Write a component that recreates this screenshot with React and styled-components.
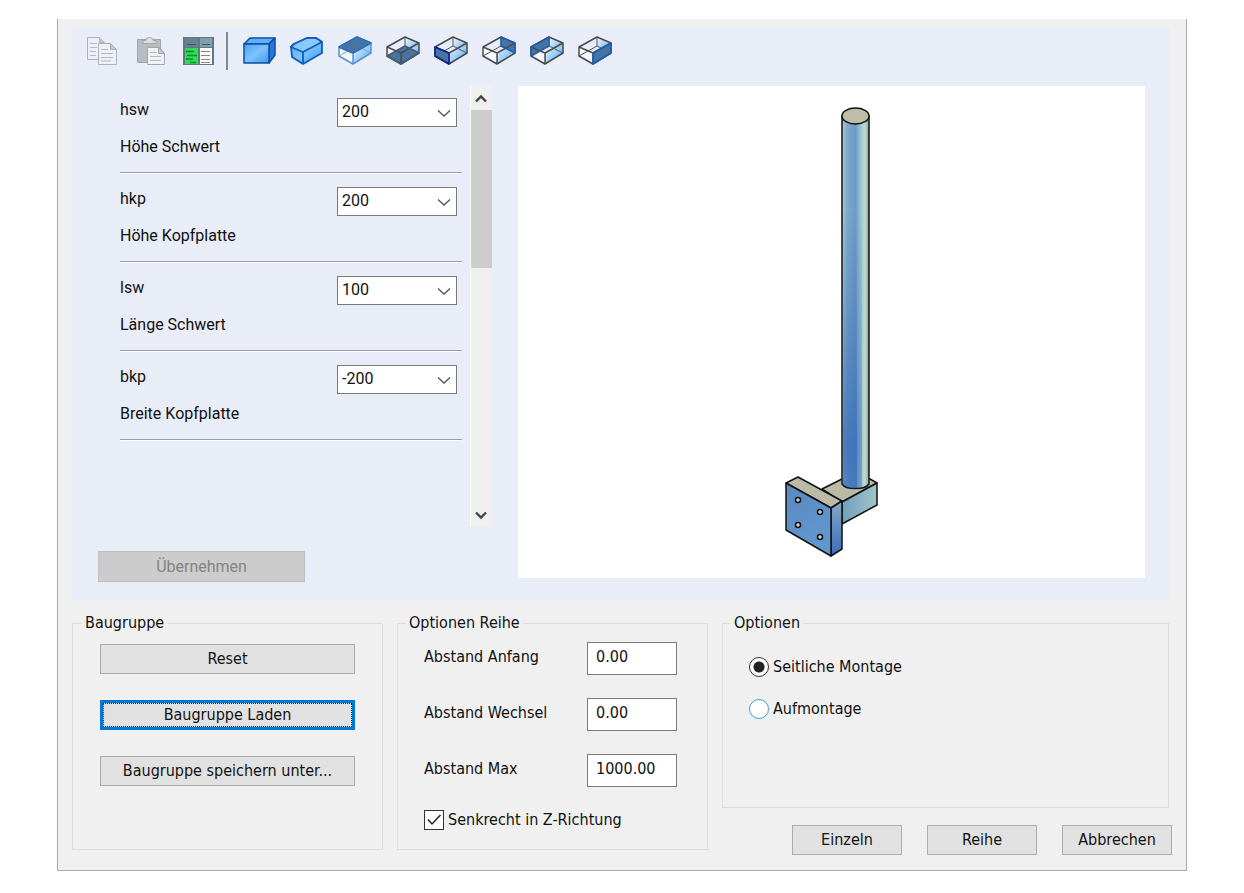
import React from 'react'
import styled, { createGlobalStyle } from 'styled-components'

const GlobalStyle = createGlobalStyle`
  *, *::before, *::after {
    box-sizing: border-box;
  }

  body {
    margin: 0;
    background: #fff;
    color: #111;
    font-family: 'DejaVu Sans Condensed', 'DejaVu Sans', sans-serif;
    font-stretch: condensed;
    font-size: 16px;
    line-height: 20px;
  }

  button, input, select {
    font: inherit;
    color: inherit;
    margin: 0;
  }
`

const Dialog = styled.main`
  margin: 19px 57px 22px;
  padding: 9px 14px 15px;
  background: #f0f0f0;
  border: 1px solid #a9a9a9;
  border-top: 0;
`

const ModelPanel = styled.section`
  margin-right: 2px;
  padding: 0 25px 18px 0;
  background: #e9edf7;
`

const Toolbar = styled.div`
  display: flex;
  align-items: center;
  gap: 14px;
  height: 58px;
  padding: 0 14px 12px;
`

const ToolButton = styled.button`
  display: flex;
  padding: 0;
  border: 0;
  background: none;
`

const Separator = styled.span`
  width: 2px;
  height: 38px;
  margin-left: -4px;
  background: #85898f;
`

const ModelBody = styled.div`
  display: flex;
  gap: 26px;
  padding-left: 26px;
`

const ParamColumn = styled.div`
  flex: none;
  width: 394px;
  font-family: Roboto, sans-serif;
  font-stretch: normal;
`

const ParamScroller = styled.div`
  display: flex;
  justify-content: space-between;
  height: 441px;
  margin-bottom: 24px;
  padding-left: 22px;
`

const ParamList = styled.div`
  display: flex;
  flex-direction: column;
  gap: 14px;
  width: 342px;
  padding-top: 12px;
`

const Param = styled.div`
  height: 75px;
  border-bottom: 1px solid #9a9ca2;
  box-shadow: 0 1px 0 #fff;
`

const ParamHead = styled.div`
  display: flex;
  justify-content: space-between;
  height: 39px;
  padding-right: 5px;
`

const ParamLabel = styled.label`
  line-height: 24px;
`

const SelectBox = styled.div`
  display: grid;
  width: 120px;
  height: 29px;

  > * {
    grid-area: 1 / 1;
  }

  > svg {
    align-self: center;
    justify-self: end;
    margin-right: 6px;
    pointer-events: none;
  }
`

const Select = styled.select`
  appearance: none;
  width: 100%;
  padding: 0 24px 2px 4px;
  border: 1px solid #7a7a7a;
  border-radius: 0;
  background: #fff;
`

const ScrollBar = styled.div`
  display: flex;
  flex-direction: column;
  justify-content: space-between;
  width: 22px;
  background: #f0f0f0;
  border-left: 1px solid #fff;
`

const ScrollButton = styled.button`
  display: flex;
  align-items: center;
  justify-content: center;
  height: 24px;
  padding: 0 2px 0 0;
  border: 0;
  background: none;
`

const Thumb = styled.div`
  height: 158px;
  margin-bottom: auto;
  background: #cdcdcd;
`

const ApplyButton = styled.button`
  width: 207px;
  height: 31px;
  padding: 0;
  background: #ccc;
  border: 1px solid #bfbfbf;
  color: #838383;
`

const Preview = styled.div`
  flex: 1;
  display: flex;
  align-items: center;
  justify-content: center;
  height: 492px;
  background: #fff;
`

const Groups = styled.div`
  display: grid;
  grid-template-columns: 311fr 311fr 450fr;
  gap: 14px;
  align-items: start;
  margin-top: 14px;
`

const Group = styled.fieldset`
  display: flex;
  flex-direction: column;
  gap: ${props => props.$gap}px;
  min-width: 0;
  min-height: ${props => props.$height}px;
  margin: 0 ${props => props.$inset || 0}px 0 0;
  padding: ${props => props.$pad};
  border: 1px solid #dcdcdc;
`

const Legend = styled.legend`
  margin-left: -18px;
  padding: 0 3px;
  line-height: 18px;
`

const Button = styled.button`
  height: 30px;
  padding: 0 4px;
  background: #e1e1e1;
  border: 1px solid #adadad;
`

const DefaultButton = styled(Button)`
  border: 3px solid #0078d7;
  outline: 1px dotted #222;
  outline-offset: -4px;
`

const Field = styled.div`
  display: flex;
  justify-content: space-between;
  line-height: 29px;
`

const NumberInput = styled.input`
  width: 90px;
  height: 33px;
  padding: 0 8px 4px;
  border: 1px solid #7a7a7a;
  background: #fff;
`

const Choice = styled.label`
  display: flex;
  align-items: center;
  gap: 4px;
  height: 20px;
`

const Mark = styled.input`
  appearance: none;
  flex: none;
  width: 20px;
  height: 20px;
  background: #fff;
`

const Radio = styled(Mark)`
  border: 1px solid #3f9be6;
  border-radius: 50%;

  &:checked {
    border-color: #333;
    background: radial-gradient(circle, #222 5px, #fff 6px);
  }
`

const CheckBox = styled.span`
  display: grid;

  > * {
    grid-area: 1 / 1;
  }

  > input {
    border: 1px solid #333;
  }

  > svg {
    pointer-events: none;
    visibility: hidden;
  }

  > input:checked + svg {
    visibility: visible;
  }
`

const SideColumn = styled.div`
  min-width: 0;
`

const Actions = styled.div`
  display: flex;
  justify-content: flex-end;
  gap: 25px;
  margin-top: 17px;

  ${Button} {
    width: 110px;
  }
`

const Chevron = ({ up, bold }) => (
  <svg width="14" height="10" viewBox="0 0 14 10" fill="none" stroke={bold ? '#444' : '#555'}>
    <path
      d={bold ? (up ? 'M2 8.5l5-5 5 5' : 'M2 2.5l5 5 5-5') : 'M1 2.5l6 5.5 6-5.5'}
      strokeWidth={bold ? 2.4 : 1.3}
    />
  </svg>
)

const CopyIcon = () => (
  <svg width="34" height="30" viewBox="0 0 34 30" fill="#eef0f5" stroke="#adb1b8">
    <path d="M1.5 1.5h12l5 5v17h-17z" />
    <path d="M13.5 1.5v5h5" fill="#c5c8ce" />
    <path d="M4 7.5h7M4 11.5h7M4 15.5h6M4 19.5h6" stroke="#b4b7bd" />
    <path d="M12.5 7.5h12l6 6v15h-18z" />
    <path d="M24.5 7.5v6h6z" fill="#c5c8ce" />
    <path d="M15 13.5h7M15 17.5h12M15 21.5h12M15 25h10" stroke="#b4b7bd" />
  </svg>
)

const PasteIcon = () => (
  <svg width="34" height="30" viewBox="0 0 34 30" stroke="#a3a6ab">
    <path d="M3.5 3.5h23v23h-23z" fill="#b8bbc0" />
    <path d="M9 7.5v-3h3c0-4 7-4 7 0h3v3z" fill="#dcdee3" />
    <path d="M13.5 11.5h12l5 6v11h-17z" fill="#f1f2f6" />
    <path d="M24.5 11.5v6h6z" fill="#c5c8ce" />
    <path d="M16 16.5h7M16 20.5h11M16 24.5h11" stroke="#b4b7bd" />
  </svg>
)

const TableIcon = () => (
  <svg width="34" height="30" viewBox="0 0 34 30">
    <path d="M1 1h31v28H1z" fill="#5f7886" />
    <path d="M3 2h13v9H3z" fill="#66818f" />
    <path d="M18 2h12v9H18z" fill="#809eae" />
    <path d="M3 12h13v16H3z" fill="#2be04b" />
    <path d="M18 12h12v16H18z" fill="#fbfbfb" />
    <path d="M5 8.5h9M20 8.5h8" stroke="#41535e" />
    <path d="M4 15.5h8M5 19.5h10M4 23h7M8 26.5h6" stroke="#17803a" strokeWidth="1.5" />
    <path d="M19 15.5h9M19 19.5h9M19 23.5h9M19 26.5h9" stroke="#8b8080" />
  </svg>
)

const BoxIcon = () => (
  <svg width="34" height="30" viewBox="0 0 34 30" stroke="#0b4ea2" strokeWidth="1.5" strokeLinejoin="round">
    <path d="M2 8 8 2h25l-6 6z" fill="#5fb0f6" />
    <path d="M27 8l6-6v17l-6 8z" fill="#2479d8" />
    <path d="M2 8h25v19H2z" fill="url(#boxFill)" />
  </svg>
)

const BarIcon = () => (
  <svg width="34" height="30" viewBox="0 0 34 30" stroke="#0c5fc0" strokeWidth="1.8" strokeLinejoin="round">
    <path d="M1 11 4 8 17 2h9l6 4v11L13 28 2 21z" fill="url(#boxFill)" />
    <path d="M1 11 4 8 17 2h9l6 4-19 10z" fill="#8cc9fb" />
    <path d="M13 16v12" fill="none" />
  </svg>
)

const faces = {
  top: 'M1 11 19 1l14 6-18 10z',
  bottom: 'M1 20 19 10l14 7-18 11z',
  left: 'M1 11l14 6v11L1 20z',
  right: 'M15 17 33 7v10L15 28z',
  backRight: 'M19 1l14 6v10l-14-7z',
  backLeft: 'M1 11 19 1v9L1 20z',
}

const edgeColors = { top: '#2b6cb8', left: '#0b1fa0', bottom: '#4b5a70' }

const FaceIcon = ({ face }) => (
  <svg width="34" height="30" viewBox="0 0 34 30" fill="none" strokeLinejoin="round">
    <path d={faces.backRight} fill="url(#glass)" />
    <path d={faces.right} fill="url(#glass)" />
    <path d={faces.left} fill="#fff" fillOpacity="0.6" />
    <path d="M1 20 19 10l14 7M19 1v9" stroke={face === 'top' ? '#6aa7e0' : '#555'} />
    <path d={faces[face]} fill="#4674a3" />
    <path
      d="M1 11 19 1l14 6v10L15 28 1 20zM1 11l14 6L33 7M15 17v11"
      stroke={face === 'top' ? '#5a94d0' : '#4b4b4b'}
      strokeWidth="1.5"
    />
    <path d={faces[face]} stroke={edgeColors[face] || '#1d5fb4'} strokeWidth="1.5" />
  </svg>
)

const RailingPost = () => (
  <svg width="94" height="450" viewBox="0 0 94 450" stroke="#111" strokeWidth="1.5" strokeLinejoin="round">
    <defs>
      <linearGradient id="pole">
        <stop offset="0" stopColor="#a9cfd2" />
        <stop offset="0.2" stopColor="#7fa9cb" />
        <stop offset="0.5" stopColor="#6d9bc6" />
        <stop offset="0.7" stopColor="#9cc5d1" />
        <stop offset="0.85" stopColor="#bcdccb" />
        <stop offset="1" stopColor="#87a79f" />
      </linearGradient>
      <linearGradient id="poleShade" x2="0" y2="1">
        <stop offset="0" stopColor="#2c62b4" stopOpacity="0" />
        <stop offset="0.85" stopColor="#2c62b4" stopOpacity="0.7" />
        <stop offset="1" stopColor="#2c62b4" stopOpacity="0.6" />
      </linearGradient>
      <linearGradient id="plate" x2="0.4" y2="1">
        <stop offset="0" stopColor="#5d88c0" />
        <stop offset="1" stopColor="#5f97cf" />
      </linearGradient>
      <linearGradient id="plateSide" x2="0" y2="1">
        <stop offset="0" stopColor="#86a9c3" />
        <stop offset="1" stopColor="#3c6db8" />
      </linearGradient>
      <linearGradient id="arm">
        <stop offset="0" stopColor="#719fbd" />
        <stop offset="1" stopColor="#a1c5c8" />
      </linearGradient>
    </defs>
    <path d="M37 382l20-10h28l7 4-35 19z" fill="#bbbaa6" />
    <path d="M57 395l35-19v22l-35 19z" fill="url(#arm)" />
    <path d="M1 376l12-6 44 24-11 7z" fill="#bbbaa6" />
    <path d="M46 401l11-7v48l-11 7z" fill="url(#plateSide)" />
    <path d="M1 376l45 25v48L1 423z" fill="url(#plate)" />
    <g fill="#d8d6b4">
      <circle cx="13" cy="393" r="2.5" />
      <circle cx="35" cy="405" r="2.5" />
      <circle cx="13" cy="418" r="2.5" />
      <circle cx="35" cy="430" r="2.5" />
    </g>
    <path d="M57 9v368c4 6 23 6 27 0V9z" fill="url(#pole)" />
    <path d="M58 100v277c3 4 10 5 14 4V100z" fill="url(#poleShade)" stroke="none" />
    <path d="M72 100v281l5-1V100z" fill="url(#poleShade)" fillOpacity="0.6" stroke="none" />
    <ellipse cx="70.5" cy="9" rx="13.5" ry="8" fill="#bdbda8" />
  </svg>
)

const SharedFills = () => (
  <svg width="0" height="0" display="block">
    <linearGradient id="boxFill" x2="1" y2="1">
      <stop offset="0" stopColor="#4aa3f5" />
      <stop offset="0.5" stopColor="#7fc3fb" />
      <stop offset="1" stopColor="#3e98f0" />
    </linearGradient>
    <linearGradient id="glass" x2="1" y2="1">
      <stop offset="0" stopColor="#f4faff" />
      <stop offset="1" stopColor="#4fa5f3" />
    </linearGradient>
  </svg>
)

const params = [
  { name: 'hsw', text: 'Höhe Schwert', value: '200' },
  { name: 'hkp', text: 'Höhe Kopfplatte', value: '200' },
  { name: 'lsw', text: 'Länge Schwert', value: '100' },
  { name: 'bkp', text: 'Breite Kopfplatte', value: '-200' },
]

const distances = [
  { id: 'anfang', label: 'Abstand Anfang', value: '0.00' },
  { id: 'wechsel', label: 'Abstand Wechsel', value: '0.00' },
  { id: 'max', label: 'Abstand Max', value: '1000.00' },
]

const views = ['top', 'bottom', 'left', 'backRight', 'backLeft', 'right']

const App = () => (
  <>
    <GlobalStyle />
    <SharedFills />
    <Dialog>
      <ModelPanel>
        <Toolbar>
          <ToolButton aria-label="Kopieren" disabled><CopyIcon /></ToolButton>
          <ToolButton aria-label="Einfügen" disabled><PasteIcon /></ToolButton>
          <ToolButton aria-label="Tabelle"><TableIcon /></ToolButton>
          <Separator />
          <ToolButton aria-label="Körper"><BoxIcon /></ToolButton>
          <ToolButton aria-label="Isometrie"><BarIcon /></ToolButton>
          {views.map(face => (
            <ToolButton key={face} aria-label={face}><FaceIcon face={face} /></ToolButton>
          ))}
        </Toolbar>
        <ModelBody>
          <ParamColumn>
            <ParamScroller>
              <ParamList>
                {params.map(({ name, text, value }) => (
                  <Param key={name}>
                    <ParamHead>
                      <ParamLabel htmlFor={name}>{name}</ParamLabel>
                      <SelectBox>
                        <Select id={name} defaultValue={value}>
                          <option>{value}</option>
                        </Select>
                        <Chevron />
                      </SelectBox>
                    </ParamHead>
                    {text}
                  </Param>
                ))}
              </ParamList>
              <ScrollBar>
                <ScrollButton aria-label="Nach oben"><Chevron up bold /></ScrollButton>
                <Thumb />
                <ScrollButton aria-label="Nach unten"><Chevron bold /></ScrollButton>
              </ScrollBar>
            </ParamScroller>
            <ApplyButton disabled>Übernehmen</ApplyButton>
          </ParamColumn>
          <Preview>
            <RailingPost />
          </Preview>
        </ModelBody>
      </ModelPanel>
      <Groups>
        <Group $gap={26} $height={236} $pad="12px 27px">
          <Legend>Baugruppe</Legend>
          <Button>Reset</Button>
          <DefaultButton>Baugruppe Laden</DefaultButton>
          <Button>Baugruppe speichern unter...</Button>
        </Group>
        <Group $gap={23} $height={236} $pad="10px 30px 10px 26px">
          <Legend>Optionen Reihe</Legend>
          {distances.map(({ id, label, value }) => (
            <Field key={id}>
              <label htmlFor={id}>{label}</label>
              <NumberInput id={id} defaultValue={value} />
            </Field>
          ))}
          <Choice>
            <CheckBox>
              <Mark type="checkbox" defaultChecked />
              <svg width="20" height="20" viewBox="0 0 20 20" fill="none" stroke="#222" strokeWidth="1.5">
                <path d="M4 9.5l4 4.5 8.5-9" />
              </svg>
            </CheckBox>
            Senkrecht in Z-Richtung
          </Choice>
        </Group>
        <SideColumn>
          <Group $gap={22} $height={194} $inset={3} $pad="25px 26px">
            <Legend>Optionen</Legend>
            <Choice>
              <Radio type="radio" name="montage" defaultChecked />
              Seitliche Montage
            </Choice>
            <Choice>
              <Radio type="radio" name="montage" />
              Aufmontage
            </Choice>
          </Group>
          <Actions>
            <Button>Einzeln</Button>
            <Button>Reihe</Button>
            <Button>Abbrechen</Button>
          </Actions>
        </SideColumn>
      </Groups>
    </Dialog>
  </>
)

export default App
